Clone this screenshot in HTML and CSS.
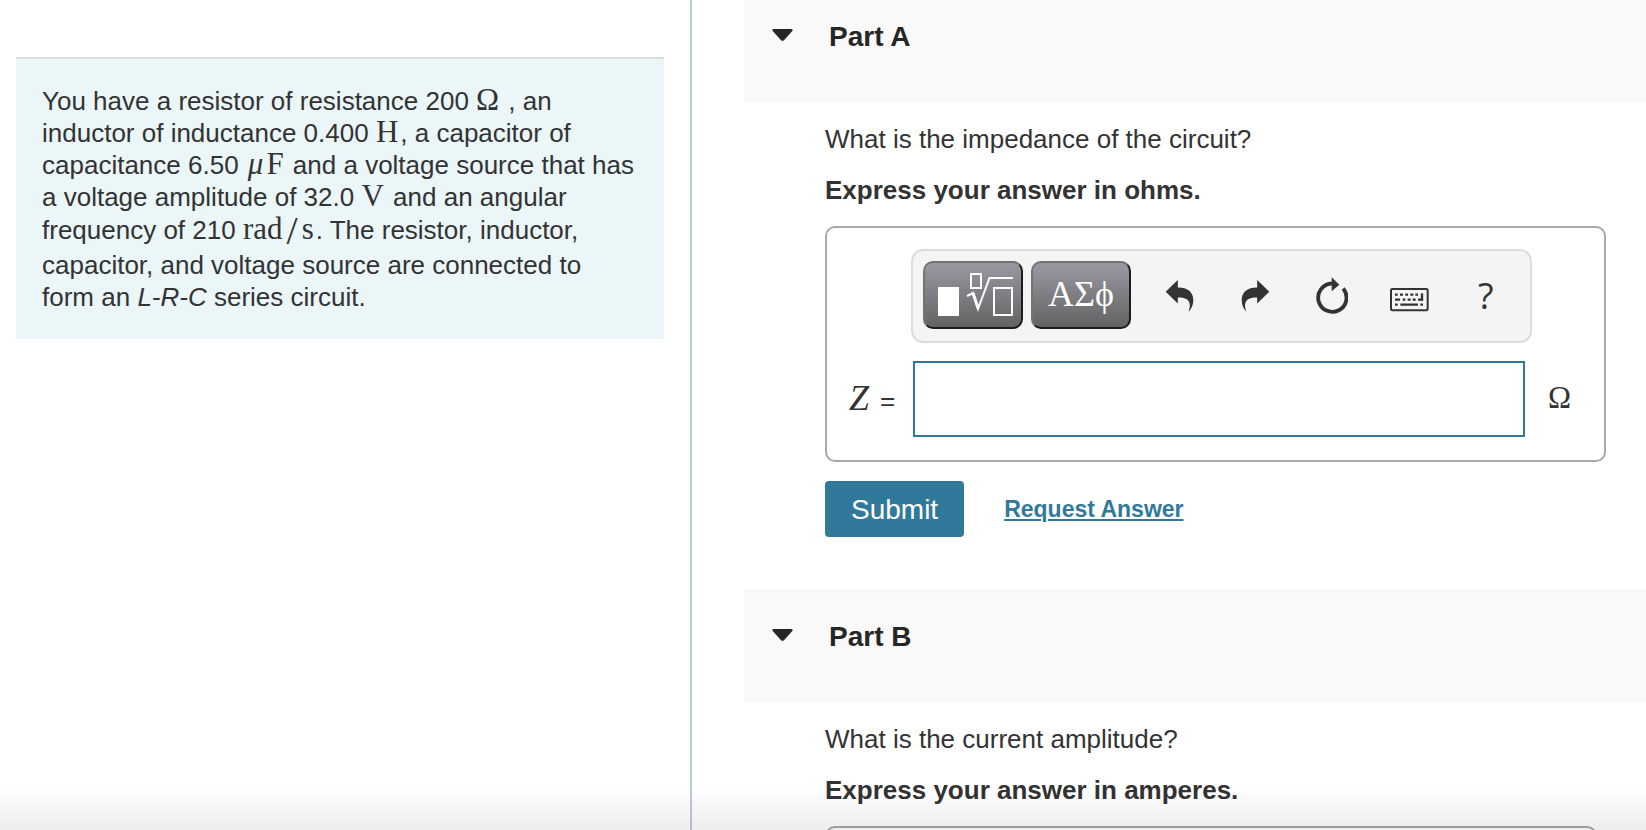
FILE: index.html
```html
<!DOCTYPE html>
<html lang="en">
<head>
<meta charset="UTF-8">
<meta name="viewport" content="width=device-width, initial-scale=1.0">
<title>L-R-C Series Circuit</title>
<link rel="stylesheet" href="styles.css">
</head>
<body>
<div class="page">
    <aside class="problem">
        <div class="problem-text">
            You have a resistor of resistance 200 <span class="math">Ω</span> , an inductor of inductance 0.400 <span class="math">H</span>, a capacitor of capacitance 6.50 <span class="math"><i>μ</i>F</span> and a voltage source that has a voltage amplitude of 32.0 <span class="math">V</span> and an angular frequency of 210 <span class="math">rad<span class="slash">/</span>s</span>. The resistor, inductor, capacitor, and voltage source are connected to form an <i>L-R-C</i> series circuit.
        </div>
    </aside>
    <main class="parts">
        <section class="part">
            <header class="part-header part-header-top">
                <button type="button" class="toggle" aria-label="Collapse Part A">
                    <svg width="21" height="16" viewBox="0 0 21 16"><path d="M1.5 0h18q2 .6.8 2L12 11.300q-1.500 1-3 0L.7 2Q-.5.6 1.500 0z" fill="#262626"/></svg>
                </button>
                <h2>Part A</h2>
            </header>
            <div class="part-body">
                <p>What is the impedance of the circuit?</p>
                <p class="instructions">Express your answer in ohms.</p>
                <form>
                    <div class="answer-box">
                        <div class="toolbar">
                            <button type="button" class="tool-dark" aria-label="Templates">
                                <svg width="96" height="64" viewBox="2 2 96 64" fill="none" stroke="#fff" stroke-width="2">
                                    <rect x="16" y="27" width="19" height="27" fill="#fff"/>
                                    <rect x="48" y="13" width="10" height="14"/>
                                    <rect x="71" y="27" width="18" height="27"/>
                                    <path d="M44 35l6-3 5 16 11.500-31H90"/>
                                    <path d="M50 32l5 15" stroke-width="3"/>
                                </svg>
                            </button>
                            <button type="button" class="tool-dark" aria-label="Symbols">ΑΣϕ</button>
                            <div class="tool-icons">
                                <button type="button" aria-label="Undo">
                                    <svg width="29" height="33" viewBox="0 0 86 98"><path d="M2 38L38 3v22c30 0 46 14 46 38 0 14-6 26-14 34 8-22 6-43-32-42v18z" fill="#333"/></svg>
                                </button>
                                <button type="button" aria-label="Redo">
                                    <svg width="29" height="33" viewBox="0 0 86 98"><path d="M84 38L48 3v22C18 25 2 39 2 63c0 14 6 26 14 34-8-22-6-43 32-42v18z" fill="#333"/></svg>
                                </button>
                                <button type="button" aria-label="Reset">
                                    <svg width="32" height="37" viewBox="0 0 96 111">
                                        <path d="M81.500 34.500A42.500 42.500 0 1 1 48 19.500" fill="none" stroke="#333" stroke-width="11.500"/>
                                        <path d="M47 1l23 22-23 20z" fill="#333"/>
                                    </svg>
                                </button>
                                <button type="button" aria-label="Keyboard shortcuts">
                                    <svg width="39" height="34" viewBox="0 -30 117 102">
                                        <rect x="3" y="3" width="110" height="64" rx="4" fill="none" stroke="#333" stroke-width="6"/>
                                        <path d="M15 20h8M30 20h9M46 20h8M61 20h9M76 20h8M15 35h15M38 35h8M53 35h9M68 35h9M84 35h15M15 50h8M31 50h53M91 50h8" stroke="#333" stroke-width="7"/>
                                        <path d="M96 16v22" stroke="#333" stroke-width="7"/>
                                    </svg>
                                </button>
                                <button type="button" class="help" aria-label="Help">?</button>
                            </div>
                        </div>
                        <div class="answer-row">
                            <label for="impedance"><i>Z</i> <span class="equals">=</span></label>
                            <input type="text" id="impedance">
                            <span class="unit">Ω</span>
                        </div>
                    </div>
                    <div class="actions">
                        <button type="submit" class="submit">Submit</button>
                        <a href="#" class="request">Request Answer</a>
                    </div>
                </form>
            </div>
        </section>
        <section class="part">
            <header class="part-header">
                <button type="button" class="toggle" aria-label="Collapse Part B">
                    <svg width="21" height="16" viewBox="0 0 21 16"><path d="M1.5 0h18q2 .6.8 2L12 11.300q-1.500 1-3 0L.7 2Q-.5.6 1.500 0z" fill="#262626"/></svg>
                </button>
                <h2>Part B</h2>
            </header>
            <div class="part-body">
                <p>What is the current amplitude?</p>
                <p class="instructions">Express your answer in amperes.</p>
                <div class="answer-box answer-box-narrow"></div>
            </div>
        </section>
    </main>
</div>
<div class="bottom-shade"></div>
</body>
</html>
```

FILE: styles.css
```css
* {
    box-sizing: border-box;
}
body {
    margin: 0;
    background-color: #fff;
    color: #333;
    font-family: "Liberation Sans", Arial, sans-serif;
    font-size: 26px;
    line-height: 32px;
}
button {
    padding: 0;
    border: none;
    background: none;
    color: inherit;
    font-family: inherit;
    cursor: pointer;
}
svg {
    display: block;
}
.page {
    display: grid;
    grid-template-columns: 692fr 954fr;
    height: 100vh;
    overflow: hidden;
}

/* Left side: problem statement */
.problem {
    padding: 57px 26px 0 16px;
    border-right: 2px solid #bccbdb;
}
.problem-text {
    padding: 26px;
    border-top: 2px solid #dcdfdf;
    background-color: #eaf6f8;
}
.math {
    padding-right: 2px;
    font-family: "Liberation Serif", "Times New Roman", serif;
    font-size: 31px;
    line-height: 28px;
}
.math i {
    margin: 0 3px 0 2px;
}
.slash {
    display: inline-block;
    margin: 0 4px;
    font-size: 40px;
    line-height: 36px;
    vertical-align: -5px;
}

/* Right side: parts */
.parts {
    padding-left: 52px;
}
.part-header {
    display: flex;
    align-items: center;
    gap: 36px;
    padding: 32px 28px 49px;
    background-color: #f9f9f9;
    color: #262626;
}
.part-header-top {
    padding-top: 21px;
}
.part-header h2 {
    margin: 0;
    font-size: 28px;
}
.part-body {
    padding: 21px 40px 52px 81px;
}
.part-body p {
    margin: 0 0 19px;
}
.part-body .instructions {
    margin-bottom: 20px;
    font-weight: bold;
}
.answer-box {
    min-height: 200px;
    padding: 21px 0 23px;
    border: 2px solid #a9a9a9;
    border-radius: 10px;
}
.answer-box-narrow {
    margin-right: 9px;
}
.toolbar {
    display: flex;
    gap: 8px;
    margin: 0 72px 18px 84px;
    padding: 10px 6px 12px 10px;
    border: 2px solid #dcdcdc;
    border-radius: 12px;
    background-color: #f4f4f4;
}
.tool-dark {
    width: 100px;
    height: 68px;
    padding-bottom: 2px;
    border: 2px solid;
    border-color: #737373 #1c1c1c #1c1c1c #737373;
    border-radius: 10px;
    background: linear-gradient(#9a98a2, #636363);
    color: #fff;
    font-family: "Liberation Serif", "Times New Roman", serif;
    font-size: 36px;
}
.tool-icons {
    display: flex;
    flex: 1;
    padding-left: 2px;
}
.tool-icons button {
    display: flex;
    flex: 1;
    align-items: center;
    justify-content: center;
}
.tool-icons .help {
    font-family: "Open Sans", sans-serif;
    font-size: 36px;
}
.answer-row {
    display: flex;
    align-items: center;
}
.answer-row label {
    width: 86px;
    padding-left: 22px;
    font-family: "Liberation Serif", "Times New Roman", serif;
    font-size: 36px;
}
.answer-row .equals {
    padding-left: 2px;
    font-family: "Liberation Sans", Arial, sans-serif;
    font-size: 26px;
}
.answer-row input {
    flex: 1;
    min-width: 0;
    height: 76px;
    padding: 0 12px;
    border: 2px solid #31799a;
    font-size: 28px;
    outline: none;
}
.unit {
    width: 79px;
    padding: 0 0 2px 23px;
    font-family: "Liberation Serif", "Times New Roman", serif;
    font-size: 31px;
}
.actions {
    display: flex;
    align-items: center;
    gap: 40px;
    margin-top: 19px;
}
.submit {
    padding: 13px 26px 11px;
    border-radius: 4px;
    background-color: #31799a;
    color: #fff;
    font-size: 28px;
    line-height: 32px;
}
.request {
    color: #31799a;
    font-size: 23px;
    font-weight: bold;
}

/* Shade along the bottom of the window */
.bottom-shade {
    position: fixed;
    right: 0;
    bottom: 0;
    left: 0;
    height: 44px;
    background: linear-gradient(rgba(0, 0, 0, 0), rgba(0, 0, 0, 0.07));
    pointer-events: none;
}
```
